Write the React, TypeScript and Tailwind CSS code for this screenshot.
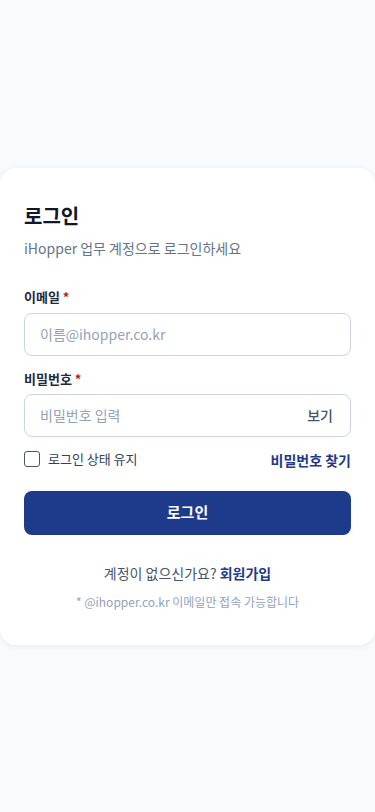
export default function App() {
  return (
    <div
      className="min-h-screen bg-[#f8fafc] flex items-center"
      style={{ fontFamily: '"Noto Sans CJK KR", "Noto Sans", sans-serif' }}
    >
      <div className="w-full bg-white rounded-2xl shadow-[0_1px_6px_rgba(15,23,42,0.07)] px-6 pt-[34px] pb-[35px]">
        <h1 className="text-[20px] font-bold text-[#0f172a] leading-7">로그인</h1>
        <p className="mt-[8px] text-[14px] text-[#64748b] leading-5">iHopper 업무 계정으로 로그인하세요</p>

        <form className="mt-[29px]" onSubmit={e => e.preventDefault()}>
          <label className="block text-[13px] font-semibold text-[#1e293b] leading-5">
            이메일 <span className="text-[#b91c1c]">*</span>
          </label>
          <input
            type="email"
            placeholder="이름@ihopper.co.kr"
            className="mt-[6px] w-full h-[43px] rounded-lg border border-[#cbd5e1] px-[15px] text-[14px] text-[#0f172a] placeholder:text-[#94a3b8] outline-none"
          />

          <label className="block mt-[13px] text-[13px] font-semibold text-[#1e293b] leading-5">
            비밀번호 <span className="text-[#b91c1c]">*</span>
          </label>
          <div className="mt-[5px] relative">
            <input
              type="password"
              placeholder="비밀번호 입력"
              className="w-full h-[43px] rounded-lg border border-[#cbd5e1] pl-[15px] pr-14 text-[14px] text-[#0f172a] placeholder:text-[#94a3b8] outline-none"
            />
            <button type="button" className="absolute right-[18px] top-1/2 -translate-y-1/2 text-[14px] font-medium text-[#475569]">
              보기
            </button>
          </div>

          <div className="mt-[10px] flex items-center justify-between">
            <label className="flex items-center gap-[8px] text-[13px] text-[#334155]">
              <span className="w-4 h-4 rounded-[3px] border-[1.5px] border-[#4b5563] bg-white" />
              로그인 상태 유지
            </label>
            <a className="text-[14px] font-bold text-[#1e3a8a] mt-[3px]">비밀번호 찾기</a>
          </div>

          <button
            type="submit"
            className="mt-[20px] w-full h-[44px] rounded-lg bg-[#1e3a8a] text-white text-[15px] font-bold"
          >
            로그인
          </button>
        </form>

        <p className="mt-[28px] text-center text-[14px] text-[#475569] leading-5">
          계정이 없으신가요? <a className="font-bold text-[#1e3a8a]">회원가입</a>
        </p>
        <p className="mt-[11px] text-center text-[12px] text-[#94a3b8] leading-4">
          * @ihopper.co.kr 이메일만 접속 가능합니다
        </p>
      </div>
    </div>
  );
}
